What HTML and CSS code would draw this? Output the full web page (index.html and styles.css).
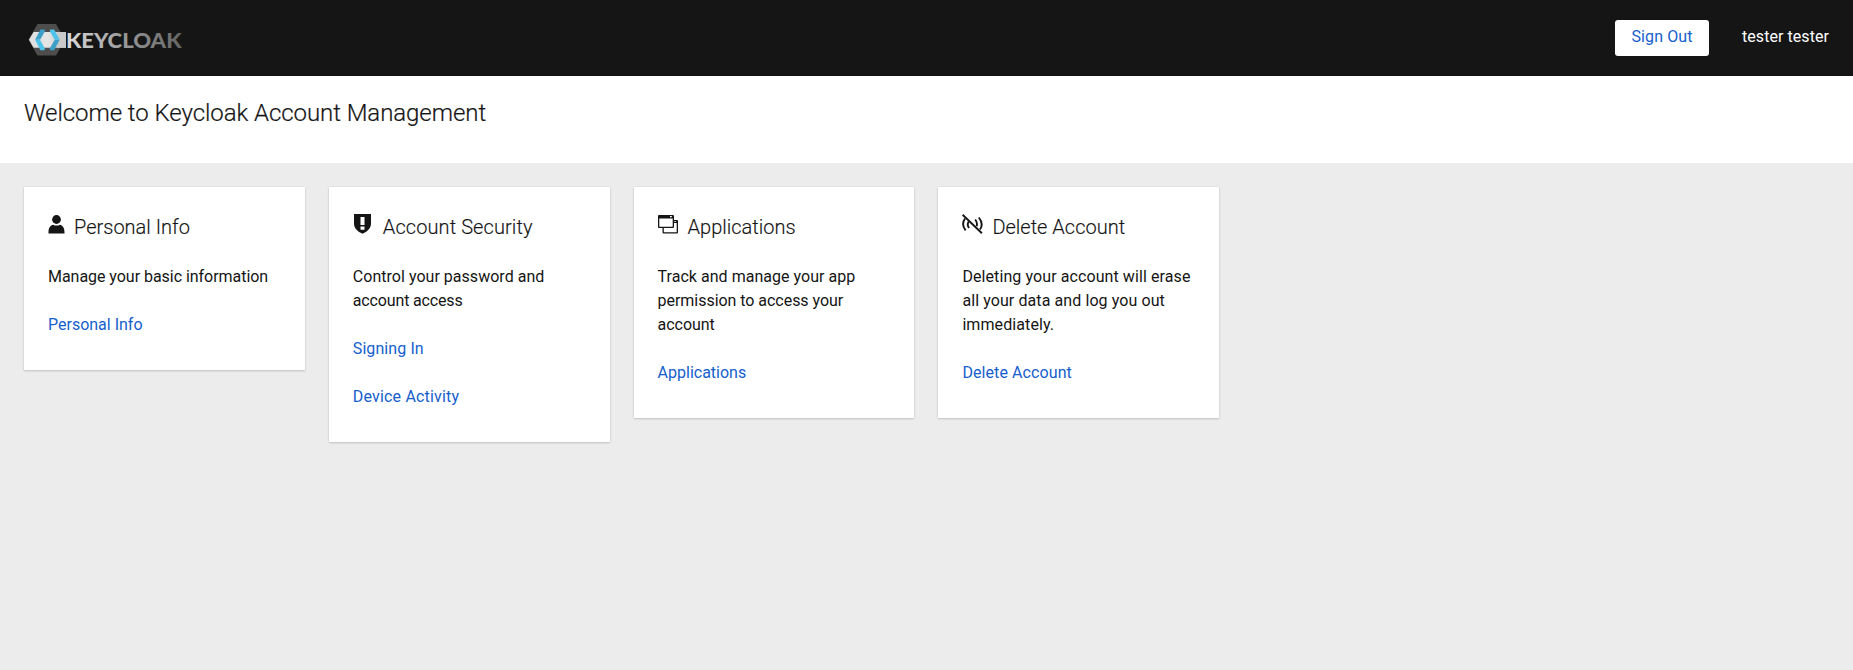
FILE: index.html
```html
<!DOCTYPE html>
<html lang="en">
<head>
<meta charset="utf-8">
<title>Keycloak Account Management</title>
<link rel="stylesheet" href="styles.css">
</head>
<body>
<header class="masthead">
  <svg class="brand" width="160" height="40" viewBox="24 20 160 40" role="img" aria-label="Keycloak">
    <defs>
      <linearGradient id="word" gradientUnits="userSpaceOnUse" x1="66" y1="0" x2="182" y2="0">
        <stop offset="0" stop-color="#dcdcdc"/><stop offset=".5" stop-color="#999"/><stop offset="1" stop-color="#646464"/>
      </linearGradient>
      <linearGradient id="band" x1="0" y1="0" x2="1" y2="0">
        <stop offset="0" stop-color="#dedede"/><stop offset=".5" stop-color="#e6e6e6"/><stop offset="1" stop-color="#bdbdbd"/>
      </linearGradient>
    </defs>
    <path fill="#4d4d4d" d="M37.5 24h18.500l9 15.800-9 15.700H37.500l-9-15.700z"/>
    <path fill="url(#band)" d="M33.600 32H66v15.700H33.600L29 39.800z"/>
    <path fill="#c9c9c9" d="M57 32h9v15.700h-9l2.500-8z"/>
    <path fill="#3d9fc8" d="M40.500 29.500h3.800l.8 1.600-5 8.700H35z"/>
    <path fill="#50c3ea" d="M35 39.800h5l5 8.900-.8 1.500h-3.800z"/>
    <path fill="#50c3ea" d="M50.400 29.500h3.800l5.500 10.300h-5l-5-8.700z"/>
    <path fill="#3d9fc8" d="M54.700 39.800h5l-5.500 10.400h-3.800l-.8-1.500z"/>
    <text class="brand-word" x="66" y="47.500" textLength="115.500" lengthAdjust="spacingAndGlyphs" fill="url(#word)">KEYCLOAK</text>
  </svg>
  <div class="tools">
    <button class="signout" type="button">Sign Out</button>
    <span class="username">tester tester</span>
  </div>
</header>
<section class="welcome"><h1>Welcome to Keycloak Account Management</h1></section>
<main class="cards">
  <article class="card">
    <h2 class="card-title">
      <svg width="17" height="20" viewBox="0 0 17 20"><circle cx="8.500" cy="5.500" r="4.400"/><path d="M.5 19.500v-1.300c0-4.300 2-7 4.600-7.500 2 1.200 4.800 1.200 6.800 0 2.600.5 4.600 3.200 4.600 7.500v1.300z"/></svg>
      <span>Personal Info</span>
    </h2>
    <p class="snug">Manage your basic information</p>
    <a href="#">Personal Info</a>
  </article>
  <article class="card">
    <h2 class="card-title wide open">
      <svg width="20" height="20" viewBox="0 0 20 20"><path fill-rule="evenodd" d="M1 0h17v9.500c0 4.500-3.500 8.200-8.500 10.200C4.500 17.700 1 14 1 9.500zM7.500 3v8h4V3zm0 9.500v3.300h4v-3.300z"/></svg>
      <span>Account Security</span>
    </h2>
    <p>Control your password and <span class="tight">account access</span></p>
    <a class="open" href="#">Signing In</a>
    <a class="loose" href="#">Device Activity</a>
  </article>
  <article class="card">
    <h2 class="card-title wide">
      <svg width="20" height="20" viewBox="0 0 20 20"><path fill-rule="evenodd" d="M0 2q0-1 1-1h14q1 0 1 1v4h3q1 0 1 1v11.500q0 1-1 1H5.500q-1 0-1-1V14H1q-1 0-1-1zM1.300 4.500v8.200h13.400V4.500zM16 9v4q0 1-1 1H5.800v4.200h12.900V9zM12 2v1.200h1.800V2zM16.500 7v1h1.300V7z"/></svg>
      <span>Applications</span>
    </h2>
    <p>Track and manage your app <span class="snug">permission to access your account</span></p>
    <a href="#">Applications</a>
  </article>
  <article class="card">
    <h2 class="card-title">
      <svg width="21" height="20" viewBox="0 0 21 20"><g fill="none" stroke="#151515" stroke-width="1.900"><path d="M.6.800l19.300 18.400"/><path d="M3 4.500c-2.500 3.500-2.400 8 .6 11.800M6.800 7.500c-1.500 2-1.300 4.300.2 6.500"/><path d="M16.800 3.500c3.300 4 3.600 8.500 1.200 12M13.200 5.500c2 2.400 2.200 4.500 1.400 6.800"/></g></svg>
      <span>Delete Account</span>
    </h2>
    <p class="open">Deleting your account will erase all your data and log you out immediately.</p>
    <a class="open" href="#">Delete Account</a>
  </article>
</main>
</body>
</html>
```
FILE: styles.css
```css
* { box-sizing: border-box; }
body { margin: 0; min-height: 670px; background: #ececec; color: #151515; font: 400 16px/24px Roboto, "Liberation Sans", sans-serif; }
.masthead { display: flex; justify-content: space-between; height: 76px; padding: 20px 24px; background: #151515; }
.brand-word { font: 900 21.5px Lato, sans-serif; }
.tools { display: flex; gap: 33px; height: 36px; }
.signout { width: 94px; height: 36px; padding: 0 0 2px; border: 0; border-radius: 3px; background: #fff; color: #1560cc; font: inherit; letter-spacing: .1px; }
.username { color: #fff; line-height: 34px; letter-spacing: .06px; }
.welcome { height: 87px; padding: 19px 24px; background: #fff; }
h1 { margin: 0; font-size: 24px; font-weight: 300; line-height: 36px; letter-spacing: -.06px; -webkit-text-stroke: .2px; }
.cards { display: grid; grid-template-columns: repeat(auto-fill, 280.8px); gap: 24px; align-items: start; padding: 24px; }
.card { display: flex; flex-direction: column; gap: 24px; padding: 27px 24px 33px; background: #fff; box-shadow: 0 1px 2px rgba(3,3,3,.16), 0 0 2px rgba(3,3,3,.08); }
.card-title { display: flex; gap: 9px; height: 27px; margin: 0; font-size: 20px; font-weight: 300; line-height: 26px; }
.card-title.wide { gap: 10px; }
.card-title svg { flex: none; fill: #151515; }
.card-title span { -webkit-text-stroke: .15px; }
.card p { margin: 0; letter-spacing: .03px; }
.card a { color: #1560cc; text-decoration: none; }
.card .open { letter-spacing: .09px; }
.card .loose { letter-spacing: .18px; }
.card .snug { letter-spacing: -.04px; }
.card .tight { letter-spacing: -.15px; }
```
